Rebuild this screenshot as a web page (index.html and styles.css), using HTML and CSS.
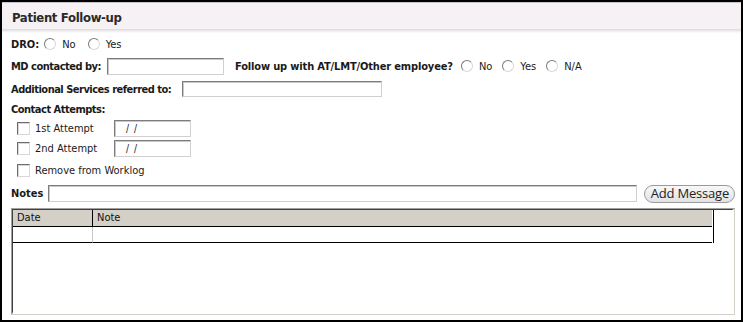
FILE: index.html
```html
<!DOCTYPE html>
<html>
<head>
<meta charset="utf-8">
<link rel="stylesheet" href="styles.css">
</head>
<body>
<div class="frame">
  <div class="header"><span class="title">Patient Follow-up</span></div>
  <div class="shade"></div>
  <div class="row r-dro">
    <span class="lbl">DRO:</span>
    <span class="radio"></span><span class="opt">No</span>
    <span class="radio"></span><span class="opt">Yes</span>
  </div>
  <div class="row r-md">
    <span class="lbl tight">MD contacted by:</span>
    <span class="input in-md"></span>
    <span class="lbl follow">Follow up with AT/LMT/Other employee?</span>
    <span class="radio"></span><span class="opt opt-f">No</span>
    <span class="radio"></span><span class="opt opt-f">Yes</span>
    <span class="radio"></span><span class="opt opt-f">N/A</span>
  </div>
  <div class="row r-add">
    <span class="lbl tight">Additional Services referred to:</span>
    <span class="input in-add"></span>
  </div>
  <div class="row r-contact">
    <span class="lbl tight">Contact Attempts:</span>
  </div>
  <div class="row r-att">
    <span class="check"></span><span class="clabel att-label">1st Attempt</span>
    <span class="input in-date">/ /</span>
  </div>
  <div class="row r-att">
    <span class="check"></span><span class="clabel att-label">2nd Attempt</span>
    <span class="input in-date">/ /</span>
  </div>
  <div class="row r-remove">
    <span class="check"></span><span class="clabel">Remove from Worklog</span>
  </div>
  <div class="row r-notes">
    <span class="lbl">Notes</span>
    <span class="input in-notes"></span>
    <span class="btn">Add Message</span>
  </div>
  <div class="tablebox">
    <div class="tableinner">
      <div class="grid">
        <div class="gh gh-date">Date</div>
        <div class="gh gh-note">Note</div>
        <div class="gc gc-date"></div>
        <div class="gc gc-note"></div>
      </div>
    </div>
  </div>
</div>
</body>
</html>
```

FILE: styles.css
```css
html, body {
  margin: 0;
  padding: 0;
  background: #fff;
}
.frame {
  width: 743px;
  height: 322px;
  box-sizing: border-box;
  border: 2px solid #000;
  font-family: "DejaVu Sans Condensed", "DejaVu Sans", sans-serif;
  font-size: 11px;
  color: #1a1a1a;
}
.header {
  height: 27px;
  box-sizing: border-box;
  padding-top: 3px;
  border-top: 1px solid #c8c6ca;
  background: #f6f1f5;
  display: flex;
  align-items: center;
  padding-left: 10px;
}
.title {
  font-weight: bold;
  font-size: 13px;
  letter-spacing: -0.35px;
  color: #2a2a2a;
}
.shade {
  height: 4px;
  background: linear-gradient(#dcdadc, #f4f4f4 70%, #fff);
}
.row {
  display: flex;
  align-items: center;
  padding-left: 9px;
}
.lbl {
  font-weight: bold;
}
.tight {
  letter-spacing: -0.5px;
}
.opt {
  margin-left: 6px;
  margin-right: 12px;
}
.opt-f {
  margin-right: 10px;
}
.radio {
  width: 10px;
  height: 10px;
  border-radius: 50%;
  border: 1px solid;
  border-color: #7a7a7a #d8d8d8 #d8d8d8 #7a7a7a;
  background: #fff;
  box-sizing: content-box;
}
.lbl + .radio {
  margin-left: 5px;
}
.r-dro { height: 20px; padding-top: 1px; }
.r-md { height: 24px; }
.r-add { height: 22px; }
.r-contact { height: 18px; }
.r-att { height: 20px; padding-left: 15px; }
.r-remove { height: 24px; padding-left: 15px; }
.r-notes { height: 23px; }
.input {
  box-sizing: border-box;
  height: 17px;
  border: 1px solid;
  border-color: #7c7c7c #d0d0d0 #d0d0d0 #7c7c7c;
  box-shadow: inset 1px 1px 0 #c8c8c8;
  background: #fff;
}
.in-md {
  width: 117px;
  margin-left: 6px;
}
.follow {
  margin-left: 11px;
  letter-spacing: -0.15px;
}
.follow + .radio {
  margin-left: 8px;
}
.in-add {
  width: 200px;
  margin-left: 11px;
  height: 16px;
}
.check {
  width: 11px;
  height: 11px;
  border: 1px solid;
  border-color: #6c6c6c #d8d8d8 #d8d8d8 #6c6c6c;
  box-shadow: inset 1px 1px 0 #d8d8d8;
  background: #fff;
}
.clabel {
  margin-left: 5px;
}
.att-label {
  width: 79px;
}
.in-date {
  width: 77px;
  padding-left: 11px;
  font-size: 10px;
  line-height: 15px;
  letter-spacing: 1px;
}
.in-notes {
  width: 589px;
  margin-left: 5px;
}
.btn {
  margin-left: 7px;
  height: 18px;
  width: 91px;
  box-sizing: border-box;
  border: 1px solid #9a9a9a;
  border-radius: 9px;
  background: linear-gradient(#f8f8f8, #e2e2e2);
  font-family: "Open Sans", "DejaVu Sans", sans-serif;
  font-size: 13px;
  letter-spacing: -0.2px;
  color: #222;
  display: flex;
  align-items: center;
  justify-content: center;
  line-height: 1;
}
.tablebox {
  margin: 3px 0 0 9px;
  width: 724px;
  height: 107px;
  box-sizing: border-box;
  border: 1px solid;
  border-color: #a0a0a0 #d4d0c8 #d4d0c8 #a0a0a0;
}
.tableinner {
  height: 100%;
  box-sizing: border-box;
  border: 1px solid;
  border-color: #404040 #fff #fff #404040;
  border-right-width: 2px;
  border-bottom-width: 2px;
}
.grid {
  display: grid;
  grid-template-columns: 80px 619px;
  grid-template-rows: 17px 16px;
  width: 700px;
  border-right: 1px solid #000;
}
.gh {
  background: #d4d0c8;
  border-bottom: 1px solid #000;
  padding-left: 4px;
  line-height: 16px;
  color: #111;
}
.gh-date {
  border-right: 1px solid #000;
}
.gc {
  border-bottom: 1px solid #000;
}
.gc-date {
  border-right: 1px solid #c8c8c8;
}
```
